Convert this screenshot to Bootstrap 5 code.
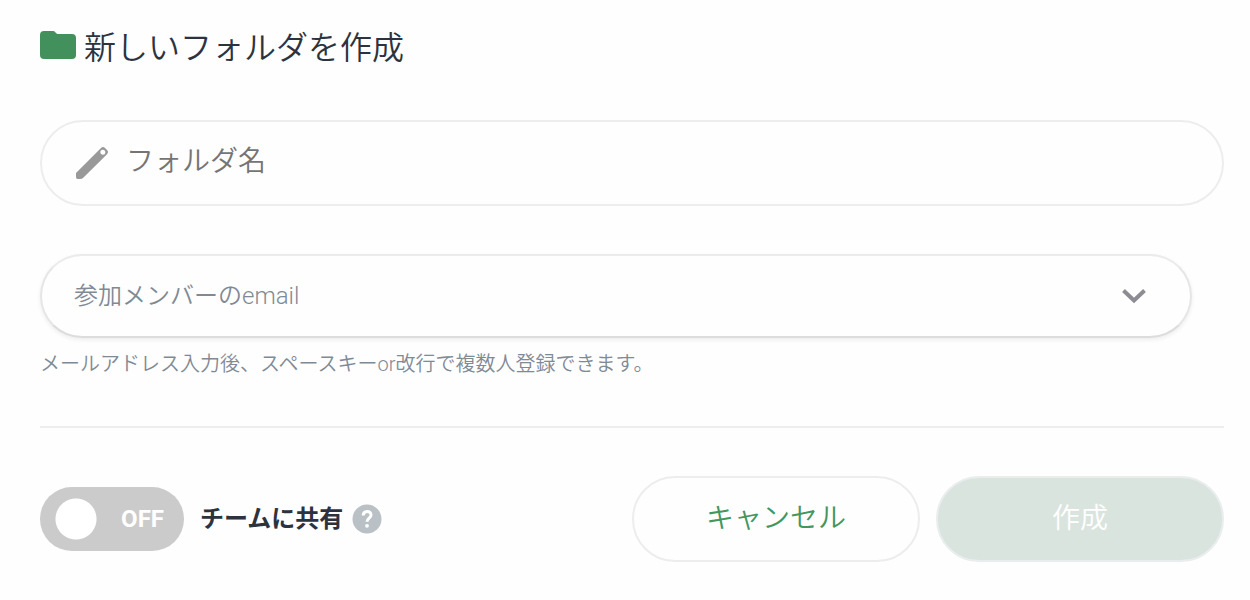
<!DOCTYPE html>
<html lang="ja">
<head>
<meta charset="utf-8">
<meta name="viewport" content="width=device-width, initial-scale=1">
<title>新しいフォルダを作成</title>
<link rel="stylesheet" href="https://cdn.jsdelivr.net/npm/bootstrap@5.3.0/dist/css/bootstrap.min.css">
<style>
body { background: #fefefe; color: #2d333e; font-family: Roboto, "Noto Sans CJK JP", sans-serif; font-weight: 350; }
.folder-form { padding: 24px 26px 24px 40px; }
.form-title { font-size: 32px; line-height: 48px; font-weight: 350; margin-bottom: 48px; }
.form-title svg { margin-bottom: 6px; }
.pill { border: 2px solid #ededed; border-radius: 43px; background-color: #fefefe; }
.name-field { height: 86px; padding: 0 32px; margin-bottom: 48px; }
.name-field input { font-size: 28px; line-height: 40px; font-weight: 350; color: #2d333e; padding: 0 0 2px; }
.name-field input::placeholder { color: #757575; opacity: 1; }
.member-field { position: relative; margin-right: 32px; }
.member-field .form-select { height: 84px; padding: 0 80px 0 32px; font-size: 24px; font-weight: 350; color: #808a95; background-image: none; border-color: #ebebeb #e6e6e6 #dcdcdc; box-shadow: 0 2px 4px rgba(0,0,0,.07); }
.member-field svg { position: absolute; right: 45px; top: 34px; pointer-events: none; }
.help-line { font-size: 20px; line-height: 32px; color: #808a95; margin: 10px 0 46px; }
.form-rule { border-top: 2px solid #ededed; opacity: 1; margin: 0 0 48px; }
.toggle { position: relative; width: 144px; height: 64px; }
.toggle input { width: 144px; height: 64px; margin: 0; border: 0; border-radius: 32px; appearance: none; background: #cbcbcb radial-gradient(circle at 36px 32px, #fff 20px, transparent 21px); }
.toggle span { position: absolute; right: 20px; top: 16px; line-height: 32px; font-size: 24px; font-weight: 700; color: #fff; pointer-events: none; }
.share-label { font-size: 24px; line-height: 32px; font-weight: 700; margin: 0 9px 0 16px; }
.pill-btn { width: 288px; height: 86px; font-size: 28px; font-weight: 350; padding: 0; color: #43965e; }
.pill-btn:disabled { background-color: #dae4de; border-color: #e9edee; color: #fff; opacity: 1; }
</style>
</head>
<body>
<form class="folder-form">
  <h1 class="form-title d-flex align-items-center gap-2">
    <svg width="36" height="28" viewBox="0 0 36 28" aria-hidden="true"><path fill="#42915d" d="M4 0h9q1.500 0 2.300 1.200T17.500 3H32a4 4 0 0 1 4 4v17a4 4 0 0 1-4 4H4a4 4 0 0 1-4-4V4a4 4 0 0 1 4-4z"/></svg>
    <span>新しいフォルダを作成</span>
  </h1>
  <div class="pill name-field d-flex align-items-center gap-3">
    <svg width="36" height="36" viewBox="0 0 36 36" aria-hidden="true" class="flex-shrink-0"><path fill="#999" fill-rule="evenodd" d="M2 28 27 3Q29 1 31 3l2 2Q35 7 33 9.200L9.500 32.500Q8 34 6 34H3.500Q2 34 2 32zM28.800 4.800a2.500 2.500 0 1 0 .01 5 2.500 2.500 0 0 0 0-5z"/></svg>
    <input type="text" class="form-control border-0 bg-transparent shadow-none" placeholder="フォルダ名" aria-label="フォルダ名">
  </div>
  <div class="member-field">
    <select class="form-select pill" aria-label="参加メンバーのemail" aria-describedby="member-help">
      <option selected>参加メンバーのemail</option>
    </select>
    <svg width="26" height="16" viewBox="0 0 26 16" aria-hidden="true"><path d="m2.500 2.500 10.500 10 10.500-10" fill="none" stroke="#8c8c92" stroke-width="4"/></svg>
  </div>
  <p class="help-line" id="member-help">メールアドレス入力後、スペースキーor改行で複数人登録できます。</p>
  <hr class="form-rule">
  <div class="d-flex flex-wrap align-items-center justify-content-between gap-3">
    <div class="d-flex align-items-center">
      <div class="toggle"><input type="checkbox" role="switch" id="share"><span>OFF</span></div>
      <label class="share-label" for="share">チームに共有</label>
      <button type="button" class="btn p-0 border-0 d-flex" aria-label="ヘルプ">
        <svg width="30" height="30" viewBox="0 0 30 30" aria-hidden="true"><circle cx="15" cy="15" r="14.500" fill="#bac1c6"/><path d="M11.200 11.500c0-5 7.800-5.300 7.800-.6 0 3.200-4 3.200-4 6.900" fill="none" stroke="#fff" stroke-width="3"/><circle cx="15" cy="21.800" r="1.900" fill="#fff"/></svg>
      </button>
    </div>
    <div class="d-flex flex-wrap gap-3">
      <button type="button" class="btn pill pill-btn">キャンセル</button>
      <button type="submit" class="btn pill pill-btn" disabled>作成</button>
    </div>
  </div>
</form>
<script src="https://cdn.jsdelivr.net/npm/bootstrap@5.3.0/dist/js/bootstrap.bundle.min.js"></script>
</body>
</html>
